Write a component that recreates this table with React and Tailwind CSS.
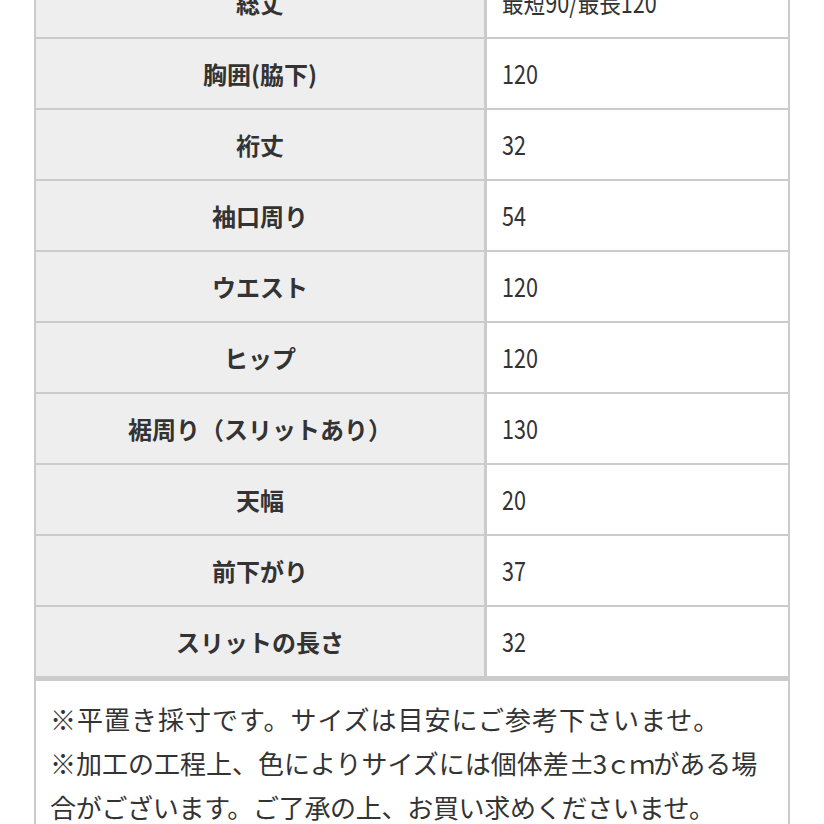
import React from "react";

const rows = [
  ["総丈", "最短90/最長120"],
  ["胸囲(脇下)", "120"],
  ["裄丈", "32"],
  ["袖口周り", "54"],
  ["ウエスト", "120"],
  ["ヒップ", "120"],
  ["裾周り（スリットあり）", "130"],
  ["天幅", "20"],
  ["前下がり", "37"],
  ["スリットの長さ", "32"],
];

const jp = { fontFamily: '"Noto Sans CJK JP", "Noto Sans", sans-serif' };

const SizeTable = () => {
  return (
    <div className="min-h-screen bg-white overflow-hidden text-[#333]" style={jp}>
      <div className="ml-[34px] w-[756px] -mt-[32px]">
        <div className="border-x-2 border-[#cbcbcb]">
          {rows.map(([label, value]) => (
            <div key={label} className="flex h-[71px] border-b-2 border-[#cbcbcb]">
              <div className="w-[451px] border-r-[3px] border-[#cbcbcb] bg-[#eeeeee] flex items-center justify-center text-[24px] font-bold">
                {label}
              </div>
              <div className="flex-1 flex items-center pl-[15px] text-[27px]">
                <span className="inline-block scale-x-[0.8] origin-left whitespace-nowrap">{value}</span>
              </div>
            </div>
          ))}
        </div>
        <div className="border-x-2 border-t-[3px] border-[#cbcbcb] pl-[14px] pt-[16px] text-[26px] leading-[44px] whitespace-nowrap">
          <p className="tracking-[1px]">※平置き採寸です。サイズは目安にご参考下さいませ。</p>
          <p>
            ※加工の工程上、色によりサイズには個体差<span className="tracking-[-2px]">±3ｃｍ</span>がある場
          </p>
          <p className="tracking-[-0.3px]">合がございます。ご了承の上、お買い求めくださいませ。</p>
        </div>
      </div>
    </div>
  );
};

export default SizeTable;
